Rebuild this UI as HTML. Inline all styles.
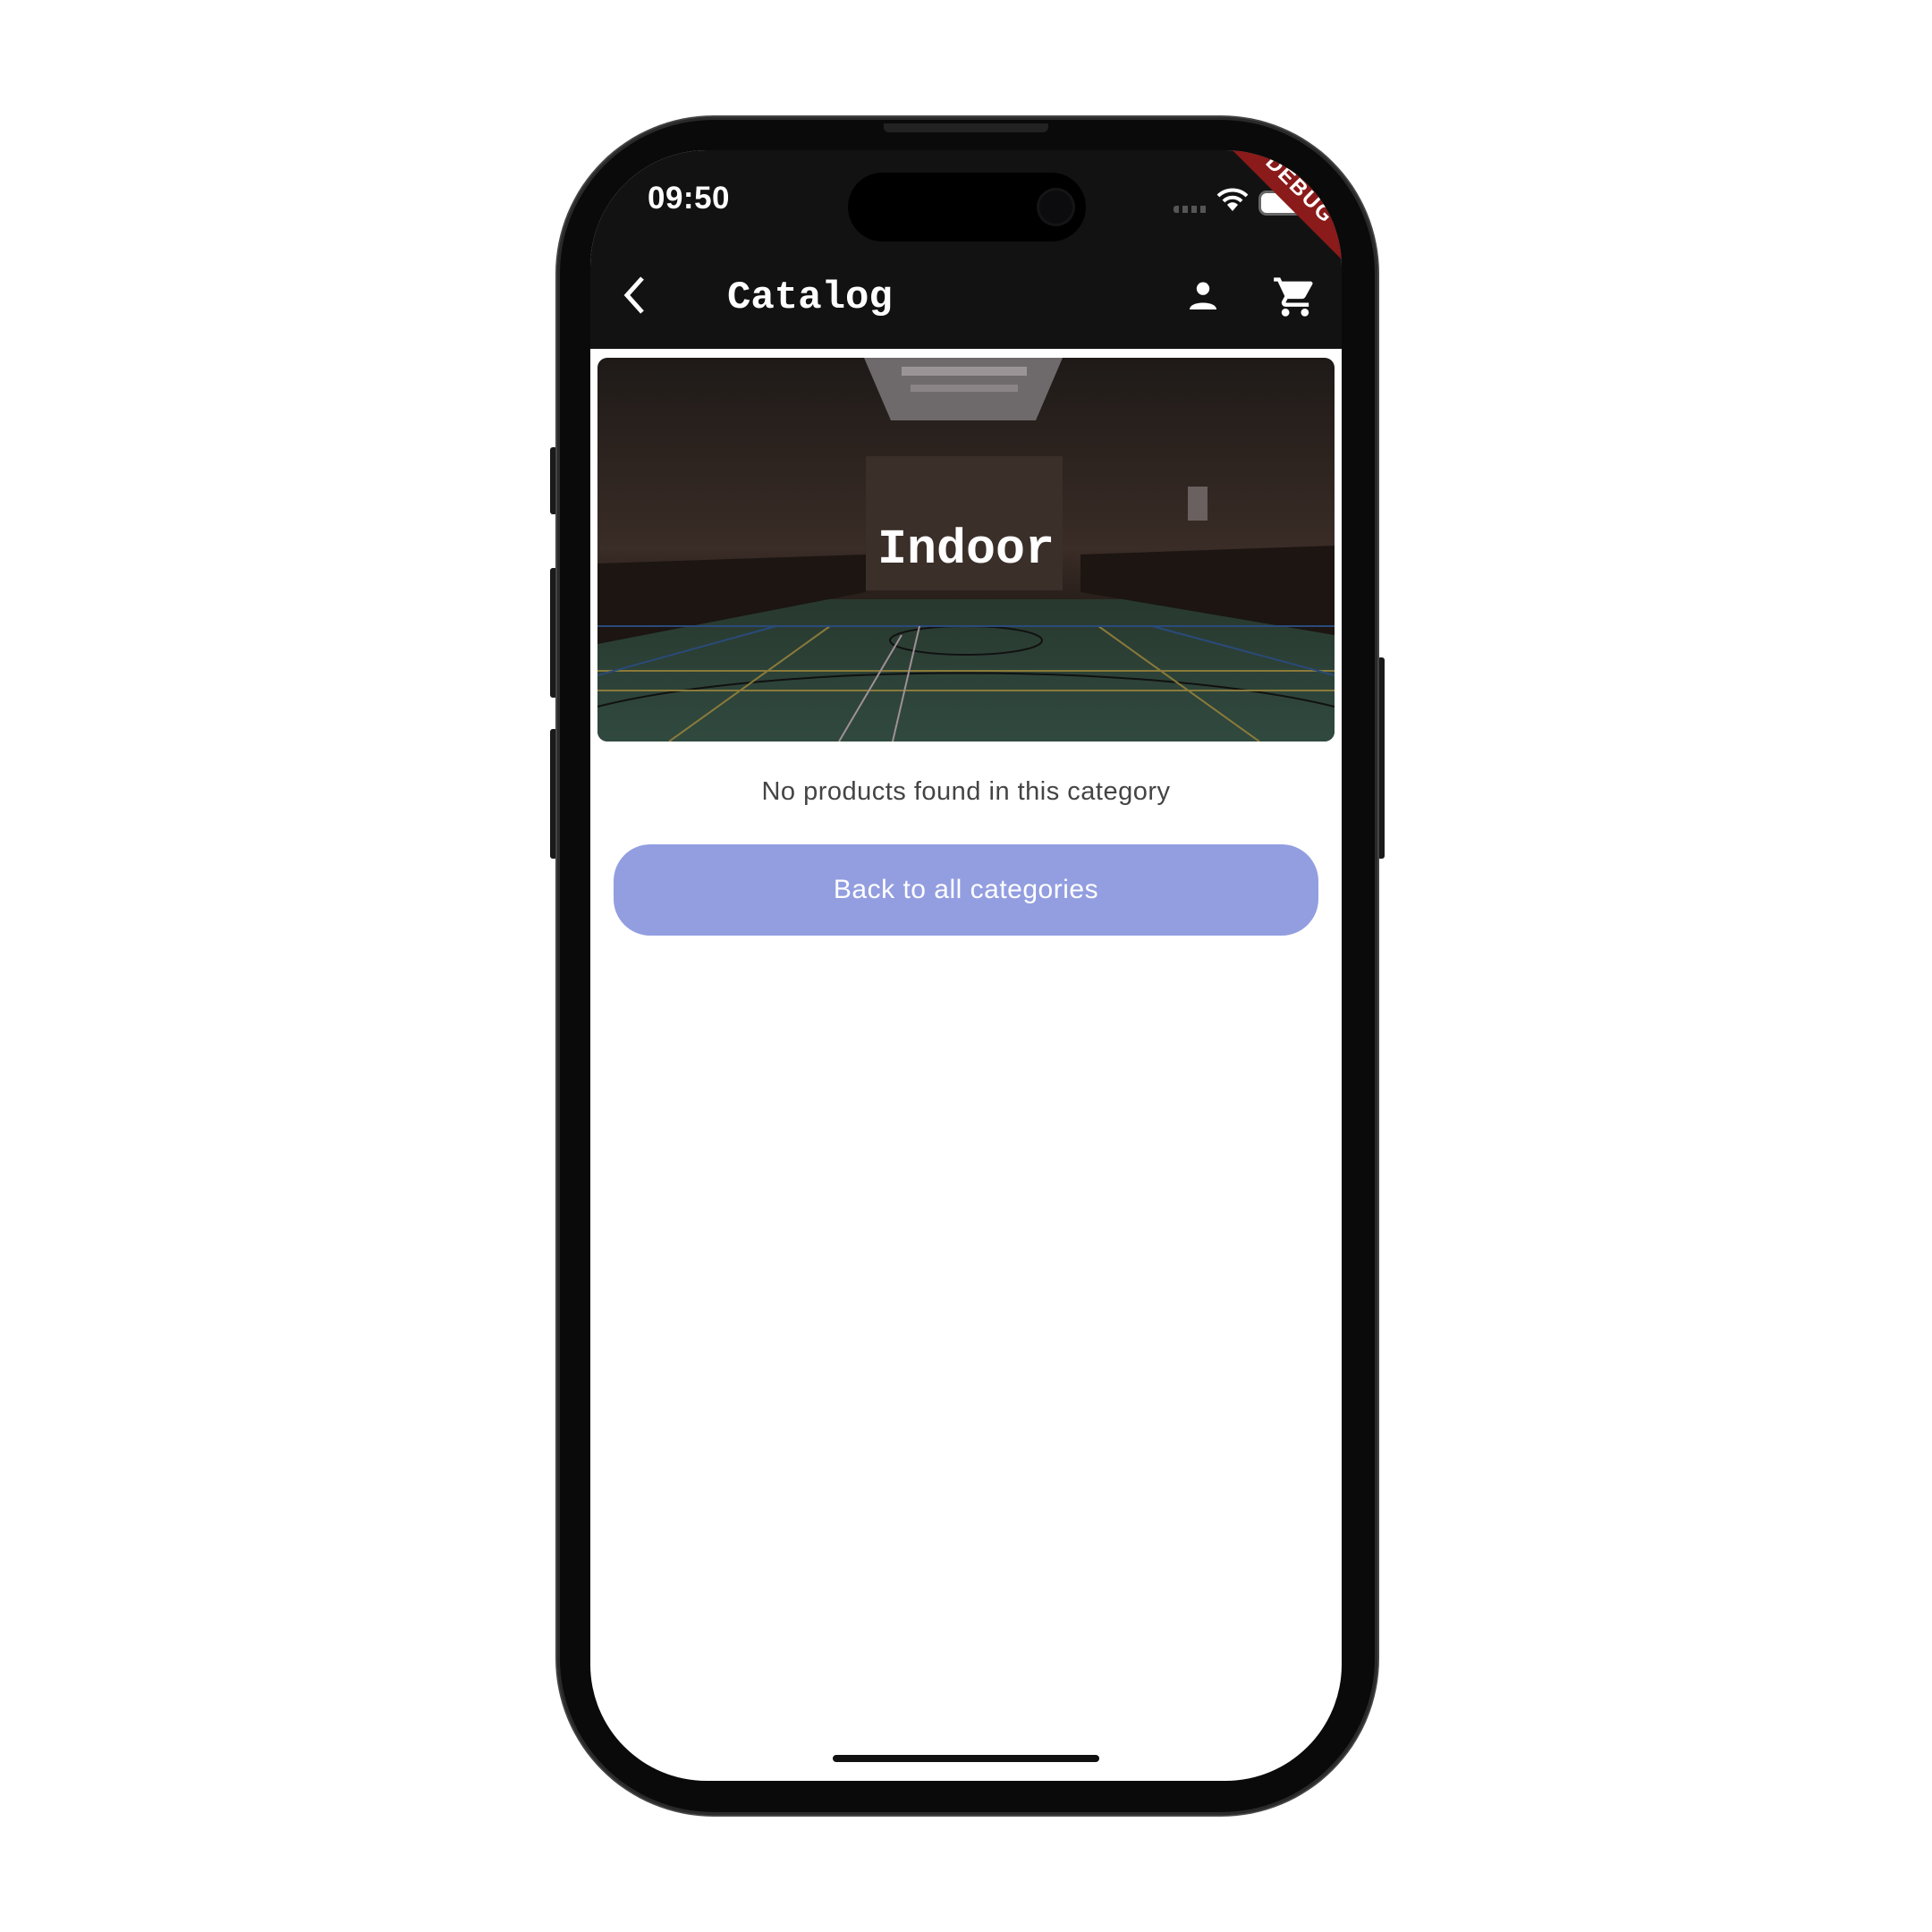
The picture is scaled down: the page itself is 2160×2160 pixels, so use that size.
<!DOCTYPE html>
<html><head><meta charset="utf-8"><style>
html,body{margin:0;padding:0;background:#fff;width:2160px;height:2160px;overflow:hidden;font-family:"Liberation Sans",sans-serif}
.phone{position:absolute;left:623px;top:131px;width:917px;height:1898px;border-radius:175px;background:#0a0a0a;box-shadow:0 0 0 3px #2a2a2a inset,0 0 0 2px #444}
.btnside{position:absolute;background:#1a1a1a;border-radius:3px}
.screen{position:absolute;left:660px;top:168px;width:840px;height:1823px;border-radius:130px;background:#fff;overflow:hidden}
.header{position:absolute;left:0;top:0;width:840px;height:222px;background:#121212;overflow:hidden}
.island{position:absolute;left:288px;top:25px;width:266px;height:77px;border-radius:39px;background:#000}
.cam{position:absolute;left:214px;top:20px;width:37px;height:37px;border-radius:50%;background:#0c0c0f;box-shadow:0 0 0 3px #151518}
.time{position:absolute;left:64px;top:34px;color:#fff;font-size:35px;font-weight:bold;letter-spacing:.5px}
.title{position:absolute;left:153px;top:140px;color:#fff;font-family:"Liberation Mono",monospace;font-weight:bold;font-size:44px}
.card{position:absolute;left:8px;top:232px;width:824px;height:429px;border-radius:11px;overflow:hidden}
.indoor{position:absolute;left:0;width:824px;top:183px;text-align:center;color:#fff;font-family:"Liberation Mono",monospace;font-weight:bold;font-size:55px}
.msg{position:absolute;left:0;width:840px;top:701px;text-align:center;color:#444;font-size:29px;letter-spacing:.5px}
.btn{position:absolute;left:26px;top:776px;width:788px;height:102px;border-radius:41px;background:#939ee0;color:#fff;font-size:30px;text-align:center;line-height:102px;letter-spacing:.5px}
.home{position:absolute;left:271px;top:1794px;width:298px;height:8px;border-radius:4px;background:#111}
.debug{position:absolute;left:673px;top:22px;width:240px;height:44px;background:#8b1a1a;transform:rotate(45deg);color:#fff;font-weight:bold;font-size:24px;text-align:center;line-height:44px;letter-spacing:2px}
</style></head><body>
<div class="btnside" style="left:615px;top:500px;width:8px;height:75px"></div>
<div class="btnside" style="left:615px;top:635px;width:8px;height:145px"></div>
<div class="btnside" style="left:615px;top:815px;width:8px;height:145px"></div>
<div class="btnside" style="left:1540px;top:735px;width:8px;height:225px"></div>
<div class="phone"></div>
<div style="position:absolute;left:988px;top:138px;width:184px;height:10px;border-radius:0 0 6px 6px;background:#222"></div>
<div class="screen">
 <div class="header">
  <div class="time">09:50</div>
  <div class="island"><div class="cam"></div></div>
  <div style="position:absolute;left:652px;top:62px;width:40px;height:8px;background:repeating-linear-gradient(90deg,#555 0 6px,transparent 6px 10px);border-radius:3px"></div>
  <svg style="position:absolute;left:700px;top:40px" width="36" height="30" viewBox="0 0 36 30"><path d="M2 11 A23 23 0 0 1 34 11" stroke="#fff" stroke-width="4" fill="none"/><path d="M8 17 A14 14 0 0 1 28 17" stroke="#fff" stroke-width="4" fill="none"/><path d="M18 28 L12 21 A8 8 0 0 1 24 21 Z" fill="#fff"/></svg>
  <div style="position:absolute;left:750px;top:48px;width:44px;height:22px;border-radius:6px;background:#fff;box-shadow:0 0 0 3px #666"></div>
  <div class="debug">DEBUG</div>
  <svg style="position:absolute;left:36px;top:140px" width="26" height="44" viewBox="0 0 26 44"><path d="M22 3 L5 22 L22 41" stroke="#fff" stroke-width="5" fill="none"/></svg>
  <div class="title">Catalog</div>
  <svg style="position:absolute;left:665px;top:143px" width="40" height="40" viewBox="0 0 24 24"><circle cx="12" cy="7" r="4.3" fill="#fff"/><path d="M3 21 C3 15 21 15 21 21 Z" fill="#fff"/></svg>
  <svg style="position:absolute;left:762px;top:138px" width="52" height="52" viewBox="0 0 24 24"><path fill="#fff" d="M7 18c-1.1 0-2 .9-2 2s.9 2 2 2 2-.9 2-2-.9-2-2-2zM1 2v2h2l3.6 7.6-1.35 2.45c-.16.28-.25.61-.25.95 0 1.1.9 2 2 2h12v-2H7.420c-.14 0-.25-.11-.25-.25l.03-.12.9-1.63h7.45c.75 0 1.41-.41 1.750-1.03l3.58-6.49A1 1 0 0 0 20 4H5.21l-.94-2H1zm16 16c-1.1 0-2 .9-2 2s.9 2 2 2 2-.9 2-2-.9-2-2-2z"/></svg>
 </div>
 <div class="card">
  <svg width="824" height="429" viewBox="0 0 824 429" style="position:absolute;left:0;top:0">
   <defs>
    <linearGradient id="w" x1="0" y1="0" x2="0" y2="1"><stop offset="0" stop-color="#1e1a18"/><stop offset=".5" stop-color="#3a2c26"/><stop offset=".62" stop-color="#2a201c"/></linearGradient>
    <linearGradient id="f" x1="0" y1="0" x2="0" y2="1"><stop offset="0" stop-color="#28392f"/><stop offset="1" stop-color="#30493f"/></linearGradient>
   </defs>
   <rect width="824" height="429" fill="url(#w)"/>
   <rect x="300" y="110" width="220" height="150" fill="#3b2f2a"/>
   <polygon points="0,270 824,270 824,429 0,429" fill="url(#f)"/>
   <polygon points="0,230 0,320 300,262 300,220" fill="#1c1512"/>
   <polygon points="824,210 824,310 540,262 540,220" fill="#1c1512"/>
   <polygon points="298,0 520,0 490,70 328,70" fill="#6e6a6c"/>
   <rect x="340" y="10" width="140" height="10" fill="#9a9496"/>
   <rect x="350" y="30" width="120" height="8" fill="#8a8486"/>
   <rect x="660" y="144" width="22" height="38" fill="#6a6060"/>
   <ellipse cx="412" cy="316" rx="85" ry="16" fill="none" stroke="#111" stroke-width="2"/>
   <path d="M0 390 C200 340 620 340 824 390" stroke="#111" stroke-width="2" fill="none"/>
   <path d="M80 429 L260 300 M740 429 L560 300 M0 350 L824 350 M0 372 L824 372" stroke="#8a7a3a" stroke-width="2" fill="none"/>
   <path d="M0 355 L200 300 M824 355 L620 300 M0 300 L824 300" stroke="#2a4a7a" stroke-width="2" fill="none"/>
   <path d="M270 429 L340 310 M330 429 L360 300" stroke="#a09098" stroke-width="2" fill="none"/>
  </svg>
  <div class="indoor">Indoor</div>
 </div>
 <div class="msg">No products found in this category</div>
 <div class="btn">Back to all categories</div>
 <div class="home"></div>
</div>
</body></html>
